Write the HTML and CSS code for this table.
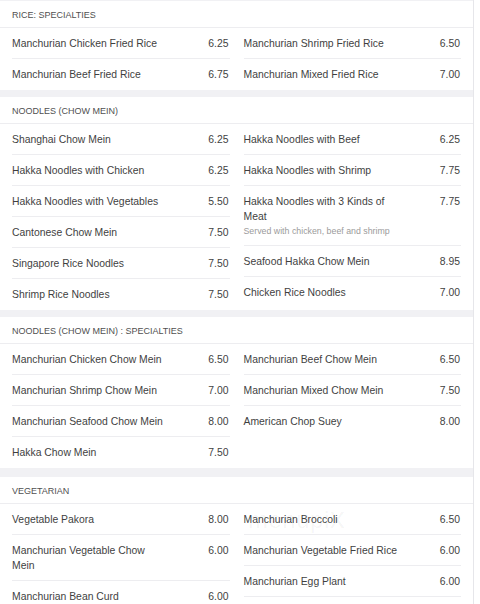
FILE: index.html
```html
<!DOCTYPE html>
<html lang="en">
<head>
<meta charset="utf-8">
<title>Menu</title>
<link rel="stylesheet" href="styles.css">
</head>
<body>
<div class="page">
  <section class="card">
    <h2 class="card-title">RICE: SPECIALTIES</h2>
    <div class="cols">
      <ul class="col">
        <li class="item"><div class="name">Manchurian Chicken Fried Rice</div><div class="price">6.25</div></li>
        <li class="item"><div class="name">Manchurian Beef Fried Rice</div><div class="price">6.75</div></li>
      </ul>
      <ul class="col">
        <li class="item"><div class="name">Manchurian Shrimp Fried Rice</div><div class="price">6.50</div></li>
        <li class="item"><div class="name">Manchurian Mixed Fried Rice</div><div class="price">7.00</div></li>
      </ul>
    </div>
  </section>

  <section class="card">
    <h2 class="card-title">NOODLES (CHOW MEIN)</h2>
    <div class="cols">
      <ul class="col">
        <li class="item"><div class="name">Shanghai Chow Mein</div><div class="price">6.25</div></li>
        <li class="item"><div class="name">Hakka Noodles with Chicken</div><div class="price">6.25</div></li>
        <li class="item"><div class="name">Hakka Noodles with Vegetables</div><div class="price">5.50</div></li>
        <li class="item"><div class="name">Cantonese Chow Mein</div><div class="price">7.50</div></li>
        <li class="item"><div class="name">Singapore Rice Noodles</div><div class="price">7.50</div></li>
        <li class="item"><div class="name">Shrimp Rice Noodles</div><div class="price">7.50</div></li>
      </ul>
      <ul class="col">
        <li class="item"><div class="name">Hakka Noodles with Beef</div><div class="price">6.25</div></li>
        <li class="item"><div class="name">Hakka Noodles with Shrimp</div><div class="price">7.75</div></li>
        <li class="item"><div class="name">Hakka Noodles with 3 Kinds of Meat<p class="desc">Served with chicken, beef and shrimp</p></div><div class="price">7.75</div></li>
        <li class="item"><div class="name">Seafood Hakka Chow Mein</div><div class="price">8.95</div></li>
        <li class="item"><div class="name">Chicken Rice Noodles</div><div class="price">7.00</div></li>
      </ul>
    </div>
  </section>

  <section class="card card--tall">
    <h2 class="card-title">NOODLES (CHOW MEIN) : SPECIALTIES</h2>
    <div class="cols">
      <ul class="col">
        <li class="item"><div class="name">Manchurian Chicken Chow Mein</div><div class="price">6.50</div></li>
        <li class="item"><div class="name">Manchurian Shrimp Chow Mein</div><div class="price">7.00</div></li>
        <li class="item"><div class="name">Manchurian Seafood Chow Mein</div><div class="price">8.00</div></li>
        <li class="item"><div class="name">Hakka Chow Mein</div><div class="price">7.50</div></li>
      </ul>
      <ul class="col">
        <li class="item"><div class="name">Manchurian Beef Chow Mein</div><div class="price">6.50</div></li>
        <li class="item"><div class="name">Manchurian Mixed Chow Mein</div><div class="price">7.50</div></li>
        <li class="item"><div class="name">American Chop Suey</div><div class="price">8.00</div></li>
      </ul>
    </div>
  </section>

  <section class="card">
    <h2 class="card-title">VEGETARIAN</h2>
    <div class="cols">
      <ul class="col">
        <li class="item"><div class="name">Vegetable Pakora</div><div class="price">8.00</div></li>
        <li class="item"><div class="name">Manchurian Vegetable Chow Mein</div><div class="price">6.00</div></li>
        <li class="item"><div class="name">Manchurian Bean Curd</div><div class="price">6.00</div></li>
      </ul>
      <ul class="col">
        <li class="item"><div class="name">Manchurian Broccoli</div><div class="price">6.50</div></li>
        <li class="item"><div class="name">Manchurian Vegetable Fried Rice</div><div class="price">6.00</div></li>
        <li class="item item--open"><div class="name">Manchurian Egg Plant</div><div class="price">6.00</div></li>
      </ul>
    </div>
  </section>

  <div class="watermark">menupi<span class="watermark-x">x</span></div>
</div>
</body>
</html>
```

FILE: styles.css
```css
html, body {
  margin: 0;
  padding: 0;
  background: #ffffff;
}

body {
  font-family: "Liberation Sans", Arial, sans-serif;
  color: #3f3f3f;
}

.page {
  position: relative;
  width: 473px;
  padding-top: 1px;
  background: #f1f1f4;
  border-right: 1px solid #e6e6ea;
  overflow: hidden;
}

.card {
  background: #ffffff;
  margin-bottom: 7px;
}

.card--tall {
  margin-bottom: 9px;
}

.card-title {
  margin: 0;
  padding: 2px 12px 0;
  height: 24px;
  font-size: 9px;
  line-height: 24px;
  font-weight: normal;
  color: #505050;
  border-bottom: 1px solid #ededf0;
}

.cols {
  display: grid;
  grid-template-columns: 1fr 1fr;
  column-gap: 14px;
  padding: 0 12px 1px;
}

.col {
  list-style: none;
  margin: 0;
  padding: 0;
}

.item {
  display: flex;
  justify-content: space-between;
  align-items: flex-start;
  padding: 7.5px 0;
  border-bottom: 1px solid #ededf0;
  font-size: 10.4px;
  line-height: 15px;
}

.item:last-child {
  border-bottom: none;
}

.item--open:last-child {
  border-bottom: 1px solid #ededf0;
}

.name {
  max-width: 157px;
}

.price {
  padding-right: 1px;
  white-space: nowrap;
}

.desc {
  margin: 1px 0 0;
  font-size: 8.8px;
  line-height: 13px;
  color: #9b9b9b;
}

.watermark {
  position: absolute;
  left: 248px;
  top: 505px;
  font-size: 24px;
  line-height: 26px;
  letter-spacing: 0.5px;
  color: rgba(0, 0, 0, 0.045);
  pointer-events: none;
}

.watermark-x {
  font-size: 30px;
  font-weight: 300;
}
```
